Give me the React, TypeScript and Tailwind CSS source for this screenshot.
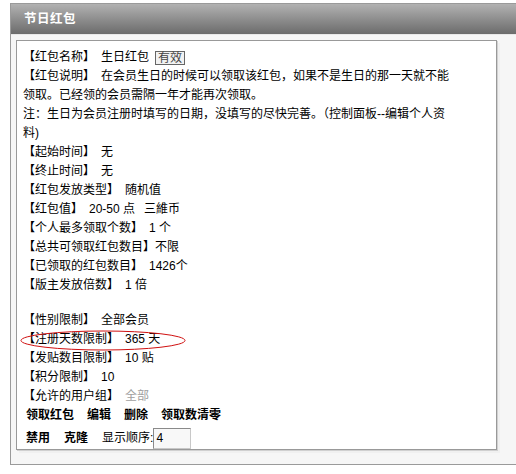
const Row = ({ label, value, gap = true }: { label: string; value?: React.ReactNode; gap?: boolean }) => (
  <div className="h-[19px] leading-[19px] whitespace-nowrap">
    <span>{label}</span>
    {value !== undefined && <span className={gap ? 'ml-[6px]' : ''}>{value}</span>}
  </div>
);

const App = () => {
  return (
    <div className="w-[516px] h-[474px] bg-white pl-[10px] pt-[3px] overflow-hidden font-['Liberation_Sans','Noto_Sans_CJK_SC',sans-serif] text-[12px] text-black">
      <div className="border-l border-t border-b border-[#9a9a9a] bg-[#f6f6f6] pb-[14px]">
        <div className="h-[31px] flex items-center pl-[13px] bg-gradient-to-b from-[#b2b2b2] to-[#6c6c6c] border-b border-[#e8e8e8]">
          <span className="text-white font-bold text-[12.5px] tracking-[0.5px]">节日红包</span>
        </div>

        <div className="ml-[5px] mt-[5px] w-[481px] h-[410px] bg-white border border-[#999] shadow-[1px_1px_0_#d0d0d0,3px_3px_0_#f0f0f0] pl-[6px] pt-[7px]">
          <div className="h-[19px] leading-[19px] flex items-center whitespace-nowrap">
            <span>【红包名称】</span>
            <span className="ml-[6px]">生日红包</span>
            <span className="ml-[6px] h-[14px] leading-[12px] px-[2px] border border-[#666] bg-[#f2f2f2] text-[#444]">有效</span>
          </div>
          <Row label="【红包说明】" value="在会员生日的时候可以领取该红包，如果不是生日的那一天就不能" />
          <Row label="领取。已经领的会员需隔一年才能再次领取。" />
          <Row label="注：生日为会员注册时填写的日期，没填写的尽快完善。（控制面板--编辑个人资" />
          <Row label="料)" />
          <Row label="【起始时间】" value="无" />
          <Row label="【终止时间】" value="无" />
          <Row label="【红包发放类型】" value="随机值" />
          <Row
            label="【红包值】"
            value={
              <>
                20-50 点<span className="ml-[9px]">三維币</span>
              </>
            }
          />
          <Row label="【个人最多领取个数】" value="1 个" />
          <Row label="【总共可领取红包数目】" value="不限" gap={false} />
          <Row label="【已领取的红包数目】" value="1426个" />
          <Row label="【版主发放倍数】" value="1 倍" />
          <div className="h-[16px]" />
          <Row label="【性别限制】" value="全部会员" />
          <div className="relative">
            <Row label="【注册天数限制】" value="365 天" />
            <svg className="absolute left-[-3px] top-[0px]" width="166" height="21" viewBox="0 0 166 21">
              <ellipse cx="83" cy="10.5" rx="82" ry="9.5" fill="none" stroke="#d01010" strokeWidth="1" />
            </svg>
          </div>
          <Row label="【发贴数目限制】" value="10 贴" />
          <Row label="【积分限制】" value="10" />
          <Row label="【允许的用户组】" value={<span className="text-[#a0a0a0]">全部</span>} />
          <div className="h-[19px] leading-[19px] flex gap-[13px] font-bold pl-[3px] whitespace-nowrap">
            <span>领取红包</span>
            <span>编辑</span>
            <span>删除</span>
            <span>领取数清零</span>
          </div>
          <div className="mt-[2px] h-[22px] flex items-center pl-[3px] whitespace-nowrap">
            <span className="font-bold">禁用</span>
            <span className="font-bold ml-[14px]">克隆</span>
            <span className="ml-[14px]">显示顺序:</span>
            <input
              defaultValue="4"
              className="w-[38px] h-[21px] border border-[#8a8a8a] border-r-[#c8c8c8] border-b-[#c8c8c8] bg-[#f8f8f8] px-[2px] text-[12px] outline-none"
            />
          </div>
        </div>
      </div>
    </div>
  );
};

export default App;
